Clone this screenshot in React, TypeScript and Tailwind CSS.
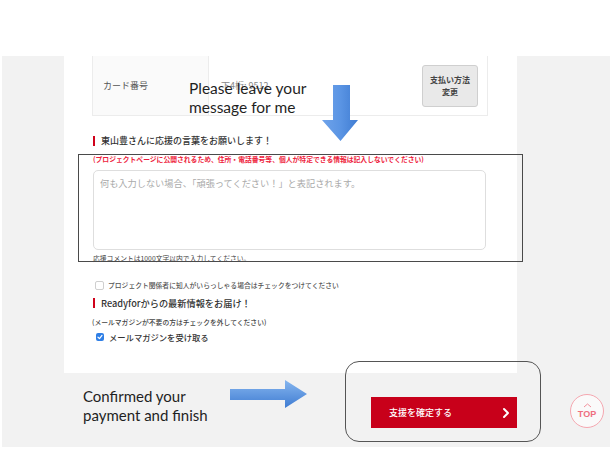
export default function App() {
  return (
    <div className="relative h-[449px] w-[610px] overflow-hidden bg-white font-['Noto_Sans_CJK_JP',sans-serif] text-[#333]">
      <div className="h-[56px]" />
      <div className="ml-[2px] flex h-[391px] bg-[#f2f2f2]">
        <div className="w-[62px]" />
        <div className="flex w-[453px] flex-col">
          {/* card */}
          <div className="flex h-[317px] flex-col bg-white px-[28px]">
            <div className="flex h-[60px] w-[396px] border border-t-0 border-[#ececec]">
              <div className="flex w-[116px] items-center border-r border-[#ececec] bg-[#fafafa] pl-[10px] text-[9px] text-[#555]">
                カード番号
              </div>
              <div className="flex flex-1 items-center justify-between pl-[12px] pr-[9px]">
                <span className="text-[9px] text-[#888]">下4桁: 9512</span>
                <div className="flex h-[42px] w-[56px] flex-col items-center justify-center rounded-[3px] border border-[#cfcfcf] bg-[#e9e9e9] text-[8px] font-bold leading-[12px] text-[#444]">
                  <span>支払い方法</span>
                  <span>変更</span>
                </div>
              </div>
            </div>

            <div className="mt-[19px] flex h-[12px] items-center pl-[1px]">
              <span className="h-[10px] w-[2px] bg-[#d0021b]" />
              <span className="ml-[6px] text-[9px] font-medium leading-[12px] text-[#333]">
                東山豊さんに応援の言葉をお願いします！
              </span>
            </div>

            <p className="mt-[7px] pl-[1px] text-[6.8px] font-bold leading-[10px] whitespace-nowrap text-[#ee1c3c]">
              (プロジェクトページに公開されるため、住所・電話番号等、個人が特定できる情報は記入しないでください)
            </p>

            <textarea
              className="mt-[6px] ml-[1px] h-[80px] w-[393px] resize-none rounded-[5px] border-[1.5px] border-[#dedede] bg-white px-[6px] py-[6px] text-[9.2px] leading-[13px] outline-none placeholder:text-[#aaa]"
              placeholder="何も入力しない場合、「頑張ってください！」と表記されます。"
            />

            <p className="mt-[3px] pl-[1px] text-[6.8px] leading-[10px] text-[#444]">
              応援コメントは1000文字以内で入力してください。
            </p>

            <div className="mt-[17px] flex h-[10px] items-center pl-[3px]">
              <span className="h-[9px] w-[9px] rounded-[2px] border border-[#cfcfcf] bg-white" />
              <span className="ml-[4px] text-[6.8px] font-medium leading-[10px] text-[#555]">
                プロジェクト関係者に知人がいらっしゃる場合はチェックをつけてください
              </span>
            </div>

            <div className="mt-[6px] flex h-[14px] items-center pl-[1px]">
              <span className="h-[10px] w-[2px] bg-[#d0021b]" />
              <span className="ml-[6px] text-[9.2px] font-medium leading-[14px] text-[#333]">
                Readyforからの最新情報をお届け！
              </span>
            </div>

            <p className="mt-[7px] text-[6.8px] font-medium leading-[10px] text-[#444]">
              (メールマガジンが不要の方はチェックを外してください)
            </p>

            <div className="mt-[4px] flex h-[12px] items-center pl-[4px]">
              <span className="flex h-[8px] w-[8px] items-center justify-center rounded-[2px] bg-[#2f7fe6]">
                <svg width="6" height="6" viewBox="0 0 6 6" fill="none">
                  <path d="M1 3.2 L2.5 4.6 L5 1.4" stroke="white" strokeWidth="1.2" strokeLinecap="round" strokeLinejoin="round" />
                </svg>
              </span>
              <span className="ml-[5px] text-[8.3px] font-medium leading-[12px] text-[#333]">
                メールマガジンを受け取る
              </span>
            </div>
          </div>

          {/* confirm button */}
          <div className="mt-[24px] flex justify-end">
            <div className="flex h-[31px] w-[146px] items-center justify-between bg-[#c8001a] pl-[18px] pr-[7px]">
              <span className="text-[9px] font-medium text-white">支援を確定する</span>
              <svg width="8" height="12" viewBox="0 0 8 12" fill="none">
                <path d="M2 2 L6 6 L2 10" stroke="white" strokeWidth="2" strokeLinecap="round" strokeLinejoin="round" />
              </svg>
            </div>
          </div>
        </div>
      </div>

      {/* floating TOP button */}
      <div className="absolute left-[570px] top-[394px] flex h-[34px] w-[34px] flex-col items-center justify-center rounded-full border-[1.5px] border-[#f5a7b0] bg-white/60 font-['Liberation_Sans',sans-serif]">
        <svg width="9" height="5" viewBox="0 0 9 5" fill="none" className="mb-[1px]">
          <path d="M1 4 L4.5 1 L8 4" stroke="#f2909c" strokeWidth="1" />
        </svg>
        <span className="text-[9px] font-bold leading-[10px] text-[#ef6f80]">TOP</span>
      </div>

      {/* annotations */}
      <div className="absolute left-[189px] top-[79px] font-['Lato',sans-serif] text-[15.5px] leading-[19px] text-[#1f1f1f]">
        Please leave your
        <br />
        message for me
      </div>
      <svg className="absolute left-[321px] top-[85px]" width="38" height="58" viewBox="0 0 38 58">
        <defs>
          <linearGradient id="gd" x1="0" y1="0" x2="1" y2="0">
            <stop offset="0" stopColor="#6fa3ea" />
            <stop offset="0.5" stopColor="#5b95e4" />
            <stop offset="1" stopColor="#3f7cd2" />
          </linearGradient>
        </defs>
        <path d="M12 0 H29 V35 H37 L19.5 56 L1 35 H12 Z" fill="url(#gd)" />
      </svg>
      <div className="absolute left-[78px] top-[154px] h-[108px] w-[445px] border-[1.5px] border-[#4a4a4a]" />

      <div className="absolute left-[83px] top-[387px] font-['Lato',sans-serif] text-[15px] leading-[19px] text-[#1f1f1f]">
        Confirmed your
        <br />
        payment and finish
      </div>
      <svg className="absolute left-[230px] top-[380px]" width="78" height="29" viewBox="0 0 78 29">
        <defs>
          <linearGradient id="gr" x1="0" y1="0" x2="0" y2="1">
            <stop offset="0" stopColor="#86b6ef" />
            <stop offset="1" stopColor="#3f7cd2" />
          </linearGradient>
        </defs>
        <path d="M0 9 H55 V0 L77 14 L55 28 V20 H0 Z" fill="url(#gr)" />
      </svg>
      <div className="absolute left-[345px] top-[361px] h-[81px] w-[196px] rounded-[14px] border-[1.5px] border-[#555]" />
    </div>
  )
}
